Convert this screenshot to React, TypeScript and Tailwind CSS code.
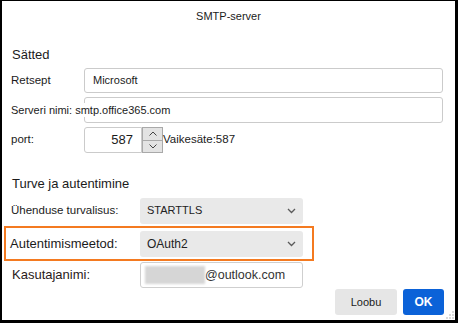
import React from 'react';

function Chevron() {
  return (
    <svg width="9" height="6" viewBox="0 0 9 6" className="text-[#5a5a5a]">
      <polyline points="1,1 4.5,4.5 8,1" fill="none" stroke="currentColor" strokeWidth="1.3" />
    </svg>
  );
}

function Select({ value, big }: { value: string; big?: boolean }) {
  return (
    <div className="w-[163px] h-[26px] bg-[#e9e9e9] rounded-[3px] flex items-center justify-between pl-[7px] pr-[7px]">
      <span className={big ? 'text-[12px] text-[#222]' : 'text-[11px] text-[#222]'}>{value}</span>
      <Chevron />
    </div>
  );
}

export default function App() {
  return (
    <div
      className="w-[458px] h-[323px] bg-white border-l-2 border-t border-r-[3px] border-b-[3px] border-black flex flex-col relative text-[#1b1b1b]"
      style={{ fontFamily: '"Liberation Sans", Arial, sans-serif' }}
    >
      {/* Title */}
      <div className="h-[30px] flex items-center justify-center text-[11px]">SMTP-server</div>

      {/* Sätted */}
      <div className="mt-[16px] pl-[10px] text-[13px] leading-[16px]">Sätted</div>

      <div className="mt-[5px] flex items-center pl-[9px] h-[25px]">
        <span className="w-[73px] text-[11.5px]">Retsept</span>
        <div className="w-[359px] h-[25px] border border-[#cbcbcb] rounded-[3px] flex items-center pl-[8px] text-[11px]">
          Microsoft
        </div>
      </div>

      <div className="mt-[4px] relative flex items-center pl-[82px] h-[26px]">
        <div className="w-[359px] h-[26px] border border-[#cbcbcb] rounded-[3px]" />
        <span className="absolute left-[9px] top-[6px] bg-white text-[11px] leading-[14px]">
          Serveri nimi: smtp.office365.com
        </span>
      </div>

      <div className="mt-[4px] flex items-center pl-[9px] h-[26px]">
        <span className="w-[73px] text-[11.5px]">port:</span>
        <div className="w-[58px] h-[26px] border border-[#cbcbcb] rounded-l-[3px] flex items-center justify-end pr-[8px] text-[13px]">
          587
        </div>
        <div className="w-[21px] h-[26px] flex flex-col">
          <div className="flex-1 border border-[#a9a9a9] bg-[#e3e3e3] flex items-center justify-center">
            <svg width="8" height="5" viewBox="0 0 8 5">
              <polyline points="0.5,4.5 4,1 7.5,4.5" fill="none" stroke="#444" strokeWidth="1" />
            </svg>
          </div>
          <div className="flex-1 border border-t-0 border-[#a9a9a9] bg-[#e3e3e3] flex items-center justify-center">
            <svg width="8" height="5" viewBox="0 0 8 5">
              <polyline points="0.5,0.5 4,4 7.5,0.5" fill="none" stroke="#444" strokeWidth="1" />
            </svg>
          </div>
        </div>
        <span className="text-[11.5px]">Vaikesäte:587</span>
      </div>

      {/* Turve ja autentimine */}
      <div className="mt-[23px] pl-[10px] text-[13px] leading-[16px]">Turve ja autentimine</div>

      <div className="mt-[5px] flex items-center pl-[9px] h-[27px]">
        <span className="w-[129px] text-[11.5px]">Ühenduse turvalisus:</span>
        <Select value="STARTTLS" />
      </div>

      <div className="mt-[2px] ml-[2px] w-[310px] h-[35px] border-2 border-[#f47a20] flex items-center">
        <span className="w-[134px] pl-[4px] text-[13px]">Autentimismeetod:</span>
        <Select value="OAuth2" big />
      </div>

      <div className="mt-[1px] flex items-center pl-[10px] h-[26px]">
        <span className="w-[128px] text-[13px] text-[#2a1a1a]">Kasutajanimi:</span>
        <div className="w-[163px] h-[26px] border border-[#cfcfcf] rounded-[3px] flex items-center pl-[4px]">
          <div className="w-[60px] h-[18px] bg-[#d6d6d6] blur-[1px]" />
          <span className="text-[12.5px] text-[#333]">@outlook.com</span>
        </div>
      </div>

      <div className="mt-[1px] flex justify-end gap-[6px] pr-[11px]">
        <div className="w-[62px] h-[26px] bg-[#e6e6e6] rounded-[3px] flex items-center justify-center text-[11px]">
          Loobu
        </div>
        <div className="w-[41px] h-[26px] bg-[#0b62d8] rounded-[3px] flex items-center justify-center text-[12px] font-bold text-white">
          OK
        </div>
      </div>

      {/* resize grip */}
      <svg width="8" height="8" viewBox="0 0 8 8" className="absolute right-[1px] bottom-[1px]">
        <circle cx="7" cy="1" r="0.7" fill="#999" />
        <circle cx="4" cy="4" r="0.7" fill="#999" />
        <circle cx="7" cy="4" r="0.7" fill="#999" />
        <circle cx="1" cy="7" r="0.7" fill="#999" />
        <circle cx="4" cy="7" r="0.7" fill="#999" />
        <circle cx="7" cy="7" r="0.7" fill="#999" />
      </svg>
    </div>
  );
}
